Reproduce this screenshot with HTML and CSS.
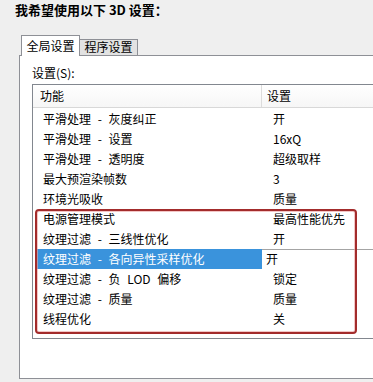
FILE: index.html
```html
<!DOCTYPE html>
<html lang="zh-CN">
<head>
    <meta charset="UTF-8">
    <meta name="viewport" content="width=device-width, initial-scale=1.0">
    <link rel="stylesheet" href="styles.css">
    <title>3D 设置</title>
</head>
<body>
    <div class="title">我希望使用以下 3D 设置：</div>
    <div class="tabs">
        <div class="tab active">全局设置</div>
        <div class="tab">程序设置</div>
    </div>
    <div class="panel">
        <div class="label">设置(S):</div>
        <div class="list">
            <div class="list-head">
                <div class="head-name">功能</div>
                <div class="head-value">设置</div>
            </div>
            <div class="row"><span class="name">平滑处理 - 灰度纠正</span><span class="value">开</span></div>
            <div class="row"><span class="name">平滑处理 - 设置</span><span class="value">16xQ</span></div>
            <div class="row"><span class="name">平滑处理 - 透明度</span><span class="value">超级取样</span></div>
            <div class="row"><span class="name">最大预渲染帧数</span><span class="value">3</span></div>
            <div class="row"><span class="name">环境光吸收</span><span class="value">质量</span></div>
            <div class="row"><span class="name">电源管理模式</span><span class="value">最高性能优先</span></div>
            <div class="row"><span class="name">纹理过滤 - 三线性优化</span><span class="value">开</span></div>
            <div class="row selected"><span class="name">纹理过滤 - 各向异性采样优化</span><span class="value">开</span></div>
            <div class="row"><span class="name">纹理过滤 - 负 LOD 偏移</span><span class="value">锁定</span></div>
            <div class="row"><span class="name">纹理过滤 - 质量</span><span class="value">质量</span></div>
            <div class="row"><span class="name">线程优化</span><span class="value">关</span></div>
            <!-- red annotation box -->
            <div class="mark"></div>
        </div>
    </div>
</body>
</html>
```

FILE: styles.css
```css
body {
    margin: 0;
    height: 382px;
    overflow: hidden;
    background: #efefef;
    font-family: "Noto Sans CJK SC", "Liberation Sans", sans-serif;
    font-size: 12px;
    color: #000;
}

.title {
    padding: 2px 0 0 15px;
    height: 18px;
    line-height: 16px;
    font-size: 13px;
    font-weight: bold;
}

.tabs {
    display: flex;
    align-items: flex-end;
    margin: 15px 0 0 21px;
    height: 20px;
}

.tab {
    box-sizing: border-box;
    height: 16px;
    width: 58px;
    line-height: 14px;
    text-align: center;
    background: #e2e2e2;
    border: 1px solid #8e9096;
    border-bottom: none;
    border-left: none;
}

.tab.active {
    position: relative;
    z-index: 1;
    height: 21px;
    width: 59px;
    margin-bottom: -1px;
    line-height: 19px;
    background: #fff;
    border-left: 1px solid #8e9096;
}

/* panel and list run off the right edge of the window, so no right border */
.panel {
    box-sizing: border-box;
    margin-left: 19px;
    height: 324px;
    background: #fff;
    border: 1px solid #8e9096;
    border-right: none;
}

.label {
    margin: 10px 0 0 12px;
    line-height: 14px;
    height: 14px;
}

.list {
    position: relative;
    box-sizing: border-box;
    margin: 4px 0 0 12px;
    height: 255px;
    border: 1px solid #82878f;
    border-right: none;
    word-spacing: 4px;
}

.list-head {
    display: flex;
    height: 22px;
    line-height: 22px;
    border-bottom: 1px solid #d8d8d8;
    margin-bottom: 1px;
    background: linear-gradient(to bottom, #fff, #f6f6f6);
}

.head-name {
    box-sizing: border-box;
    width: 229px;
    padding-left: 7px;
    border-right: 1px solid #dcdcdc;
}

.head-value {
    padding-left: 5px;
}

.row {
    display: flex;
    height: 20px;
    line-height: 20px;
}

.row .name {
    box-sizing: border-box;
    width: 229px;
    padding-left: 10px;
    white-space: nowrap;
}

.row .value {
    padding-left: 11px;
}

.row.selected .name {
    width: 226px;
    margin-left: 3px;
    padding-left: 7px;
    background: #3a93dc;
    color: #fff;
}

.row.selected .value {
    flex: 1;
    padding-left: 4px;
    box-shadow: inset 0 1px #a4a4a4;
}

.mark {
    position: absolute;
    left: 2px;
    top: 124px;
    box-sizing: border-box;
    width: 322px;
    height: 125px;
    border: 2px solid #a32c2c;
    border-radius: 4px;
    box-shadow: inset 0 0 0 1px rgba(235, 160, 160, 0.6);
}
```
